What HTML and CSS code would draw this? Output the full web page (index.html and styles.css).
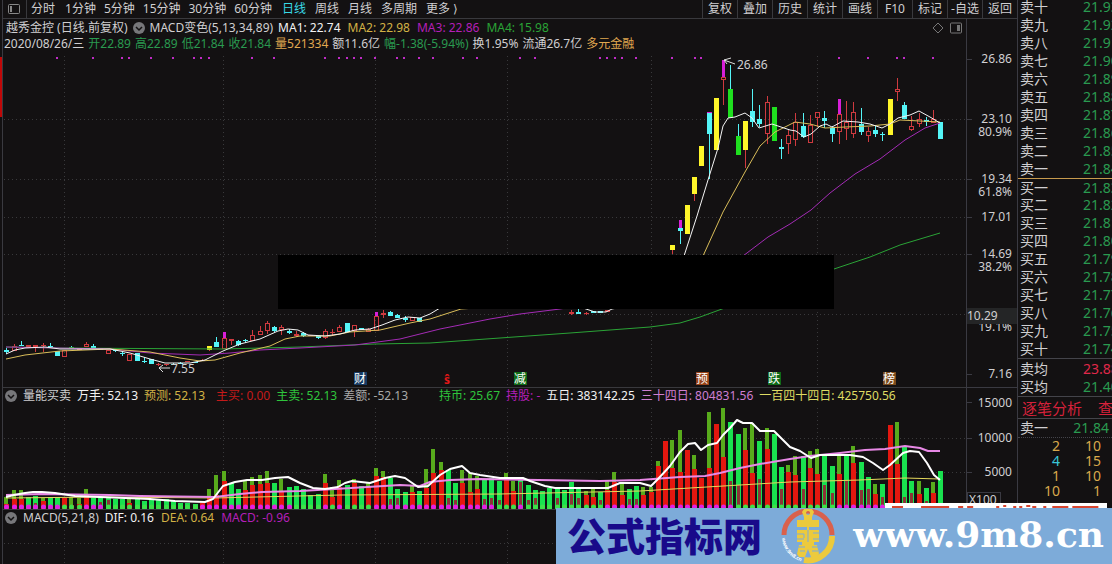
FILE: index.html
```
<!DOCTYPE html>
<html lang="zh-CN">
<head>
    <meta charset="UTF-8">
    <meta name="viewport" content="width=device-width, initial-scale=1.0">
    <title>越秀金控 日线</title>
    <link rel="stylesheet" href="styles.css">
</head>
<body>
    <div class="edge"><div class="edge-mark"></div></div>

    <div class="main">
        <nav class="toolbar">
            <button class="layout-button" aria-label="布局">
                <svg width="12" height="12" viewBox="0 0 12 12"><rect x="0.5" y="1.5" width="11" height="9" rx="1" fill="none" stroke="#888"/><rect x="2" y="3" width="2" height="6" fill="#888"/></svg>
            </button>
            <div class="periods">
                <button>分时</button>
                <div class="minutes">
                    <button>1分钟</button>
                    <button>5分钟</button>
                    <button>15分钟</button>
                    <button>30分钟</button>
                    <button>60分钟</button>
                </div>
                <div class="days">
                    <button class="active">日线</button>
                    <button>周线</button>
                    <button>月线</button>
                    <button>多周期</button>
                    <button>更多&nbsp;⟩</button>
                </div>
            </div>
            <div class="tools">
                <button>复权</button>
                <button>叠加</button>
                <button>历史</button>
                <button>统计</button>
                <button>画线</button>
                <button>F10</button>
                <button>标记</button>
                <button>-自选</button>
                <button>返回</button>
            </div>
        </nav>

        <div class="workspace">
            <div class="charts">
                <section class="panel price-panel">
                    <div class="legend title-legend">
                        <span>越秀金控 (日线.前复权)</span>
                        <svg class="fold" viewBox="0 0 12 12"><circle cx="6" cy="6" r="6" fill="#77777a"/><path d="M3 5l3 3 3-3" fill="none" stroke="#131112" stroke-width="1.5"/></svg>
                        <span>MACD变色(5,13,34,89)</span>
                        <div class="averages">
                            <span class="white">MA1: 22.74</span>
                            <span class="gold">MA2: 22.98</span>
                            <span class="magenta">MA3: 22.86</span>
                            <span class="green">MA4: 15.98</span>
                        </div>
                        <span class="legend-icons">
                            <svg width="12" height="12" viewBox="0 0 12 12"><path d="M6 1l5 5-5 5-5-5z" fill="none" stroke="#777"/></svg>
                            <svg width="12" height="12" viewBox="0 0 12 12"><rect x="0.5" y="1" width="11" height="10" rx="1" fill="none" stroke="#777"/><rect x="7" y="3" width="3" height="6" fill="#777"/></svg>
                        </span>
                    </div>
                    <div class="legend quote-legend">
                        <span>2020/08/26/三</span>
                        <span class="down">开22.89</span>
                        <span class="down">高22.89</span>
                        <span class="down">低21.84</span>
                        <span class="down">收21.84</span>
                        <span class="amber">量521334</span>
                        <span>额11.6亿</span>
                        <span class="down">幅-1.38(-5.94%)</span>
                        <span>换1.95%</span>
                        <span>流通26.7亿</span>
                        <span class="amber">多元金融</span>
                    </div>
                    <svg id="price-chart" class="price-chart" viewBox="3 52 963 335" preserveAspectRatio="none"></svg>
                </section>

                <section class="panel">
                    <div class="legend">
                        <svg class="fold" viewBox="0 0 12 12"><circle cx="6" cy="6" r="6" fill="#77777a"/><path d="M3 5l3 3 3-3" fill="none" stroke="#131112" stroke-width="1.5"/></svg>
                        <span>量能买卖</span>
                        <span class="white">万手: 52.13</span>
                        <span class="gold">预测: 52.13</span>
                        <span class="red after-pair">主买: 0.00</span>
                        <span class="lime">主卖: 52.13</span>
                        <span class="grey">差额: -52.13</span>
                        <span class="lime after-group">持币: 25.67</span>
                        <span class="magenta">持股: -</span>
                        <span class="white">五日: 383142.25</span>
                        <span class="violet">三十四日: 804831.56</span>
                        <span class="yellow">一百四十四日: 425750.56</span>
                    </div>
                    <svg id="volume-chart" class="volume-chart" viewBox="3 404 963 105" preserveAspectRatio="none"></svg>
                </section>

                <section class="panel">
                    <div class="legend">
                        <svg class="fold" viewBox="0 0 12 12"><circle cx="6" cy="6" r="6" fill="#77777a"/><path d="M3 5l3 3 3-3" fill="none" stroke="#131112" stroke-width="1.5"/></svg>
                        <span>MACD(5,21,8)</span>
                        <div class="averages">
                            <span class="white">DIF: 0.16</span>
                            <span class="gold">DEA: 0.64</span>
                            <span class="magenta">MACD: -0.96</span>
                        </div>
                    </div>
                    <svg id="macd-chart" class="macd-chart" viewBox="3 526 963 38" preserveAspectRatio="none"></svg>
                </section>
            </div>

            <div class="axis">
                <svg id="axis" width="50" height="545" viewBox="967 19 50 545"></svg>
            </div>
        </div>
    </div>

    <aside class="book">
        <table class="levels">
            <tbody id="levels"></tbody>
        </table>
        <div class="tabs">
            <button>逐笔分析</button>
            <button>查看</button>
        </div>
        <div class="last"><span>卖一</span><span class="down">21.84</span></div>
        <table class="ticks">
            <tbody>
                <tr><td>2</td><td>10</td></tr>
                <tr><td class="cyan">4</td><td>15</td></tr>
                <tr><td>1</td><td>10</td></tr>
                <tr><td>10</td><td>1</td></tr>
            </tbody>
        </table>
    </aside>

    <div class="banner">
        <svg class="banner-strip" viewBox="0 0 222 5" preserveAspectRatio="none">
            <rect width="222" height="5" fill="#fff"/>
            <path d="M7 4h11M36 4h28M73 4h5M82 4h6M111 4h3M118 3h3M128 4h3M134 4h3M141 3h4M147 4h4M158 4h3M167 4h16M187 4h26" stroke="#d8452f" stroke-width="2"/>
        </svg>
        <div class="banner-body">
            <span class="site-name">公式指标网</span>
            <svg class="site-logo" viewBox="0 0 56 56">
                <path d="M4 27A24 24 0 0 1 52 27" fill="none" stroke="#d9614c" stroke-width="5"/>
                <path d="M52 28A24 24 0 0 1 24 52" fill="none" stroke="#ecca3d" stroke-width="6"/>
                <path id="logo-arc" d="M2 30A26 26 0 0 0 25 54" fill="none"/>
                <text class="logo-text"><textPath href="#logo-arc">www.9m8.cn</textPath></text>
                <path fill="#ecca3d" fill-rule="evenodd" d="M24 1h8l2 3-2 5v3h7v7H29v3h10v12h-5v3h3l2 9-3 3h-5l-3-8-3 8h-6l-2-3 2-9h3v-3h-5V22h10v-3H17v-7h7V9l-2-5zM28 3a2 2 0 1 0 .1 0z"/>
                <path d="M17 26h7v4M33 25h6M28 22v12M17 31h7M33 31h6M18 39h7M32 39h7M20 43h5M32 43h6" fill="none" stroke="#7dabd9"/>
            </svg>
            <span class="site-url">www.9m8.cn</span>
        </div>
    </div>

    <script src="charts.js"></script>
</body>
</html>
```
FILE: styles.css
```
* {
    box-sizing: border-box;
}
body {
    margin: 0;
    height: 100vh;
    overflow: hidden;
    position: relative;
    display: flex;
    background-color: #131112;
    color: #d0cfd1;
    font-family: "Noto Sans", "Noto Sans CJK SC", sans-serif;
    font-size: 12px;
    line-height: 16px;
}
button {
    border: none;
    padding: 0;
    margin: 0;
    background: none;
    color: inherit;
    font: inherit;
    white-space: nowrap;
    cursor: pointer;
}
svg {
    display: block;
}
.edge {
    width: 3px;
    border-right: 1px solid #3a3a40;
    padding-top: 57px;
}
.edge-mark {
    height: 60px;
    background-color: #c00808;
}
.main {
    flex: 1;
    min-width: 0;
}
/* top bar */
.toolbar {
    height: 19px;
    display: flex;
    align-items: center;
    border-bottom: 1px solid #39393d;
}
.layout-button {
    width: 24px;
    height: 18px;
    padding-left: 5px;
    border-right: 1px solid #39393d;
}
.periods {
    display: flex;
    gap: 10px;
    padding-left: 4px;
}
.minutes {
    display: flex;
    gap: 8px;
}
.days {
    display: flex;
    gap: 9px;
}
.active {
    color: #39dbe8;
}
.tools {
    display: flex;
    margin-left: auto;
}
.tools button {
    width: 35px;
    height: 18px;
    border-left: 1px solid #39393d;
    text-align: center;
}
/* charts */
.workspace {
    display: flex;
}
.charts {
    flex: 1;
    min-width: 0;
}
.axis {
    border-left: 1px solid #3a3a42;
}
.panel {
    border-top: 1px solid #39393d;
}
.price-panel {
    border-top: none;
}
.legend {
    height: 16px;
    display: flex;
    align-items: center;
    gap: 6px;
    padding-left: 2px;
    white-space: nowrap;
}
.title-legend {
    height: 17px;
    padding-left: 3px;
    gap: 5px;
}
.quote-legend {
    gap: 4px;
    padding-left: 1px;
}
.averages {
    display: flex;
    gap: 7px;
}
.legend-icons {
    display: flex;
    gap: 6px;
    margin-left: auto;
    padding-right: 4px;
}
.fold {
    width: 12px;
    height: 12px;
}
.after-pair {
    margin-left: 5px;
}
.after-group {
    margin-left: 25px;
}
.price-chart,
.volume-chart,
.macd-chart {
    width: 100%;
}
.price-chart {
    height: 335px;
}
.volume-chart {
    height: 105px;
}
.macd-chart {
    height: 38px;
}
.white { color: #f2f2f2; }
.gold { color: #d2b145; }
.magenta { color: #b41fb8; }
.green { color: #2aa336; }
.down { color: #2a9a50; }
.amber { color: #e0a850; }
.red { color: #c41a1a; }
.lime { color: #2fc43c; }
.grey { color: #a9a9a9; }
.violet { color: #cf7fd2; }
.yellow { color: #dfdc63; }
.cyan { color: #39c6d8; }
/* svg parts */
.grid {
    stroke: #39393b;
    stroke-dasharray: 1 3;
}
.solid {
    stroke: #3a3a42;
}
.chart-text {
    font-size: 12px;
    fill: #d0cfd1;
}
.line {
    fill: none;
    stroke-linejoin: round;
}
/* order book */
.book {
    width: 95px;
    border-left: 1px solid #3a3a42;
    overflow: hidden;
    font-size: 14px;
    line-height: 18px;
}
.levels,
.ticks {
    width: 100%;
    table-layout: fixed;
    border-spacing: 0;
}
.levels {
    margin-top: -2px;
}
.levels th,
.levels td {
    height: 18px;
    padding: 0;
    text-align: left;
    font-weight: normal;
    line-height: 16px;
    white-space: nowrap;
}
.levels th {
    width: 65px;
    padding-left: 2px;
}
.first-bid th,
.first-bid td {
    border-top: 1px solid #c79a4d;
}
.average-top th,
.average-top td {
    height: 20px;
    border-top: 1px solid #44444a;
}
.levels .high {
    color: #e0284a;
}
.tabs {
    height: 23px;
    display: flex;
    align-items: center;
    gap: 16px;
    padding-left: 4px;
    border-top: 1px solid #44444a;
    border-bottom: 1px solid #44444a;
    color: #d7213b;
    font-size: 15px;
}
.last {
    display: flex;
    justify-content: space-between;
    padding: 0 3px 0 2px;
    border-bottom: 1px dotted #44444a;
}
.ticks td {
    height: 15px;
    padding: 0 11px 0 0;
    text-align: right;
    line-height: 15px;
    color: #d9a94c;
}
.ticks td:first-child {
    width: 53px;
}
.ticks .cyan {
    color: #39c6d8;
}
/* site banner over the lower right corner */
.banner {
    position: absolute;
    right: 0;
    bottom: 0;
    width: 50%;
}
.banner-strip {
    width: 40%;
    height: 5px;
    margin: 0 5px 0 auto;
}
.banner-body {
    height: 56px;
    display: flex;
    align-items: center;
    justify-content: space-between;
    padding: 0 8px 0 11px;
    background-color: #7dabd9;
    white-space: nowrap;
}
.site-name {
    color: #190a8a;
    font-family: "Noto Sans CJK SC", sans-serif;
    font-weight: 900;
    font-size: 39px;
    line-height: 52px;
    padding-bottom: 4px;
}
.site-logo {
    width: 56px;
    height: 56px;
}
.logo-text {
    font-size: 5px;
    font-weight: bold;
    fill: #fff;
}
.site-url {
    color: #fff;
    font-family: "DejaVu Serif", serif;
    font-weight: bold;
    font-size: 36px;
    line-height: 48px;
    padding-bottom: 4px;
}
```
FILE: charts.js
```
const NS = 'http://www.w3.org/2000/svg';
const COUNT = 130;
const colors = { r: '#cf3a3f', c: '#54f5f7', y: '#fff62a', g: '#1fe01f', m: '#d81fd8' };

// Centre of the bar with this index
function barX(i) {
    return Math.round(6.3 + 7.24 * i);
}

function add(parent, name, attrs, text) {
    const el = document.createElementNS(NS, name);
    for (const key in attrs) el.setAttribute(key, attrs[key]);
    if (text !== undefined) el.textContent = text;
    parent.appendChild(el);
    return el;
}

function rect(parent, x, y, width, height, fill) {
    add(parent, 'rect', { x, y, width, height, fill, 'shape-rendering': 'crispEdges' });
}

function line(parent, points, stroke, width) {
    add(parent, 'polyline', { class: 'line', points, stroke, 'stroke-width': width || 1 });
}

function grid(svg, rows, top, bottom) {
    [64, 223, 375, 507, 651, 817].forEach(x => {
        add(svg, 'path', { class: 'grid', d: `M${x + 0.5} ${top}V${bottom}` });
    });
    rows.forEach(y => {
        add(svg, 'path', { class: 'grid', d: `M4 ${y + 0.5}H966` });
    });
}

// index, high, low, body top, body bottom, kind
const candles = [
    [0,348,354,350,352,'c'],[1,344,351,346,351,'r'],[2,341,346,345,346,'c'],[3,345,347,345,347,'r'],
    [4,345,352,345,347,'r'],[5,343,352,345,346,'r'],[6,343,347,346,347,'c'],[7,351,356,351,356,'c'],
    [8,350,357,350,357,'r'],[9,346,348,347,348,'g'],[10,348,350,348,350,'r'],[11,342,347,344,347,'r'],
    [12,344,348,346,348,'c'],[13,348,350,348,350,'r'],[14,350,354,350,354,'r'],[15,350,352,350,351,'c'],
    [16,352,356,353,354,'c'],[17,354,361,354,361,'r'],[18,353,361,353,361,'c'],[19,357,363,361,362,'c'],
    [20,359,364,359,364,'c'],[21,363,366,364,365,'r'],[22,364,366,364,365,'r'],[23,363,365,364,365,'c'],
    [24,362,364,363,364,'c'],[25,361,362,361,362,'r'],[26,362,363,362,363,'c'],[27,359,361,360,361,'r'],
    [28,346,351,346,350,'y'],[29,337,347,342,347,'c'],[30,332,349,338,349,'r'],[31,339,345,339,341,'r'],
    [32,340,346,341,345,'c'],[33,339,343,340,341,'c'],[34,330,341,335,341,'r'],[35,326,335,331,335,'r'],
    [36,321,334,323,331,'r'],[37,326,332,327,331,'c'],[38,325,335,327,330,'r'],[39,329,334,331,333,'c'],
    [40,331,337,334,336,'r'],[41,332,337,333,336,'c'],[42,335,336,335,336,'r'],[43,336,339,336,338,'c'],
    [44,329,339,331,338,'r'],[45,329,335,332,333,'r'],[46,325,332,327,332,'r'],[47,323,332,323,332,'c'],
    [48,325,337,325,331,'r'],[49,328,330,328,330,'c'],[50,328,332,329,332,'r'],[51,316,331,316,331,'r'],
    [52,310,318,313,315,'r'],[53,311,316,312,316,'c'],[54,314,318,315,318,'c'],[55,316,322,318,320,'c'],
    [56,317,321,317,321,'r'],[57,318,322,318,322,'c'],[78,310,315,312,314,'r'],[79,309,314,312,314,'c'],
    [80,312,315,313,314,'r'],[81,311,313,311,313,'c'],[82,311,313,311,313,'c'],[83,310,312,310,312,'r'],
    [92,245,254,245,250,'y'],[93,228,244,228,231,'c'],[94,205,234,205,234,'y'],[95,177,201,177,194,'y'],
    [96,146,166,146,166,'y'],[97,112,179,113,134,'c'],[98,98,150,98,150,'y'],[99,77,105,77,80,'r'],
    [100,65,118,89,118,'g'],[101,124,155,136,155,'g'],[102,121,168,121,150,'y'],[103,89,127,111,122,'c'],
    [104,105,127,119,124,'c'],[105,96,144,102,134,'r'],[106,107,141,107,141,'g'],[107,139,159,147,149,'c'],
    [108,130,154,135,144,'r'],[109,113,146,122,140,'r'],[110,113,138,126,137,'c'],[111,115,143,125,143,'r'],
    [112,112,127,112,118,'r'],[113,111,128,118,121,'c'],[114,126,142,128,134,'c'],[115,114,144,114,132,'r'],
    [116,101,140,122,129,'r'],[117,102,138,112,134,'r'],[118,108,135,124,132,'c'],[119,127,142,131,136,'r'],
    [120,126,137,130,134,'c'],[121,132,141,134,135,'c'],[122,99,135,99,135,'y'],[123,78,101,89,92,'r'],
    [124,102,119,105,119,'c'],[125,116,131,126,130,'r'],[126,113,127,119,124,'r'],[127,117,126,120,122,'c'],
    [128,110,123,119,123,'r'],[129,122,139,122,139,'c']
];

// magenta caps: index, top, bottom, width
const caps = [[30,332,338,3],[51,312,316,3],[93,220,228,3],[97,112,113,5],[99,60,77,3],[115,99,114,3]];

const signalDots = [57,93,122,129,151,173,194,201,209,252,274,325,339,347,354,361,375,397,404,419,433,463,477,520,535,
    600,607,615,622,636,672,695,701,839,868,897,904,933];

function drawPrice() {
    const svg = document.getElementById('price-chart');
    grid(svg, [119, 179, 217, 254, 314], 56, 386);

    signalDots.forEach(x => rect(svg, x - 1, 57, 2, 2, '#c02bc6'));

    candles.forEach(([i, high, low, top, bottom, kind]) => {
        const x = barX(i);
        const wick = kind === 'y' ? colors.r : (kind === 'g' ? colors.c : colors[kind]);
        if (kind === 'r' && bottom - top > 2) {
            rect(svg, x, high, 1, top - high, wick);
            rect(svg, x, bottom, 1, low - bottom, wick);
            add(svg, 'rect', { x: x - 1.5, y: top + 0.5, width: 4, height: bottom - top - 1, fill: 'none', stroke: wick });
        } else {
            rect(svg, x, high, 1, low - high, wick);
            rect(svg, x - 2, top, 5, bottom - top, colors[kind]);
        }
    });
    caps.forEach(([i, top, bottom, width]) => {
        rect(svg, barX(i) - (width - 1) / 2, top, width, bottom - top, colors.m);
    });

    line(svg, '6,347 60,348 223,349 300,347 375,344 430,343 500,338 570,333 650,327 680,323 700,317 722,309 780,288 834,269 870,257 900,245 940,233', '#2aa336');
    line(svg, '6,347 110,349 150,353 200,355 230,353 260,350 300,348 355,345 400,339 440,329 490,319 520,314 560,309 680,290 743,256 768,237 790,224 811,210 830,193 855,174 880,159 905,140 925,128 940,123', '#a32bb5');
    line(svg, '6,359 25,355 60,351 110,349 150,352 180,358 200,361 215,360 240,353 270,346 285,339 300,336 330,336 350,332 380,330 410,323 430,319 461,309 600,300 680,295 703,256 723,212 745,172 760,146 775,132 795,122 810,124 825,128 845,127 870,126 890,124 900,120 940,122', '#d9bd5a');
    line(svg, '6,354 15,350 25,348 45,347 60,349 90,349 110,349 130,353 150,359 165,363 190,363 205,360 223,351 240,344 260,339 278,331 288,329 298,330 308,335 325,336 340,334 355,330 370,329 382,325 395,320 408,317 420,318 430,314 440,308 583,308 595,312 606,312 612,309 660,300 684,256 697,216 708,180 718,148 723,126 728,118 735,117 745,113 752,118 759,128 772,124 790,130 796,131 804,137 811,134 820,126 826,124 832,127 843,121 858,122 870,124 882,128 890,124 898,118 910,115 919,111 930,117 940,123', '#f4f4f4');

    // high and low callouts
    line(svg, '735,64 724,60 731,58', '#ddd');
    line(svg, '724,60 727,64', '#ddd');
    add(svg, 'text', { class: 'chart-text', x: 737, y: 69 }, '26.86');
    line(svg, '170,368 159,368 163,365', '#ddd');
    line(svg, '159,368 163,372', '#ddd');
    add(svg, 'text', { class: 'chart-text', x: 171, y: 373 }, '7.55');

    // hidden block
    rect(svg, 278, 255, 556, 54, '#000');

    [[360,'财','#163a63'],[520,'减','#0f6a17'],[702,'预','#964218'],[774,'跌','#0f6a17'],[889,'榜','#7a4a1c']].forEach(([x, label, fill]) => {
        rect(svg, x - 6, 372, 13, 13, fill);
        add(svg, 'text', { x: x, y: 383, 'text-anchor': 'middle', 'font-size': 12, fill: '#fff' }, label);
    });
    add(svg, 'text', { x: 447, y: 384, 'text-anchor': 'middle', 'font-size': 12, 'font-weight': 'bold', fill: '#e01818' }, 'ŝ');
}

// kind, top of the bar, top of its lower part (509 when there is none)
const volumes = `r497,504 r490,499 r490,499 g497,509 g496,503 r498,501 g497,509 g497,509 r498,498 r497,505
r498,504 r489,495 g498,509 g498,502 g498,500 g499,509 g499,509 r498,503 g498,509 g501,509
g500,509 g499,509 g499,509 g501,509 g503,509 g503,509 g504,509 r503,503 r489,497 r475,495
r471,481 g483,509 g489,509 r481,490 r477,485 r475,484 r471,483 g483,509 r479,491 g487,509
g486,509 g489,509 g495,509 g494,509 r474,483 r487,497 r480,487 g485,509 r479,483 g486,509
r483,487 r468,476 r471,477 g478,499 g489,498 g492,509 r486,492 g491,509 r469,488 r449,473
r462,470 g470,498 g483,500 r470,483 r473,492 r476,489 g480,499 g478,498 g481,500 r473,477
r481,491 g480,482 g485,500 g490,498 g491,509 g488,509 g489,498 g490,509 g482,494 g487,498
r491,495 r489,497 g492,500 r480,490 r472,482 r482,495 g489,499 g486,499 r487,495 r487,492
r461,466 r441,441 r440,468 r430,472 r450,450 r455,469 r478,478 r412,468 r424,424 r408,457
g422,481 g434,485 r428,450 r423,473 g441,479 r428,449 g434,509 g467,489 r465,472 r456,475
g456,489 r451,468 r449,474 g455,485 g466,493 r455,474 g454,480 r446,463 g462,490 g477,489
r484,494 g484,497 r425,425 r422,464 g446,497 g481,493 r481,494 g488,501 r482,493 g471,509`.split(/\s+/);

const greenDots = [[8,10],[14,26],[40,43],[45,45],[47,50],[68,70],[72,82],[101,114]];

function drawVolume() {
    const svg = document.getElementById('volume-chart');
    grid(svg, [438, 472], 408, 509);

    for (let i = 0; i < COUNT; i++) {
        const kind = volumes[i][0];
        const [top, split] = volumes[i].slice(1).split(',').map(Number);
        const x = barX(i);
        if (kind === 'r') {
            rect(svg, x - 2, top, 4, split - top, '#58ab1c');
            rect(svg, x - 2, split, 5, 509 - split, '#e3170f');
        } else {
            rect(svg, x - 2, top, 5, 509 - top, '#19e24f');
            rect(svg, x - 1, split, 3, 509 - split, '#8b3436');
        }
        const isGreen = greenDots.some(([from, to]) => i >= from && i <= to);
        add(svg, 'circle', { cx: x + 0.5, cy: 507, r: 2.5, fill: isGreen ? '#3fe04a' : '#e31fe3' });
    }

    line(svg, '6,498 100,497 215,498 340,495 500,494 640,491 740,485 790,482 860,480 905,478 940,479', '#e5d95c');
    line(svg, '6,495 40,494 110,495 140,496 215,497 240,494 262,492 300,491 335,489 400,485 420,486 430,482 450,480 480,479 600,481 640,480 680,477 705,476 720,473 740,468 760,464 790,459 810,456 840,453 865,450 885,449 905,446 920,448 928,451 940,451', '#e889e6', 2);
    line(svg, '6,497 14,495 25,493 33,492 42,492 55,493 75,496 100,497 125,498 150,499 175,501 205,502 213,499 223,486 235,482 247,480 262,480 275,478 288,477 300,483 313,488 325,489 338,487 345,483 352,481 370,483 385,478 395,476 405,478 418,487 428,486 440,475 450,469 462,466 470,473 480,475 500,478 523,478 530,481 545,486 555,488 580,488 608,488 620,483 640,483 651,486 658,479 670,466 680,452 688,444 695,443 701,450 708,445 717,443 723,435 730,428 737,420 743,423 752,423 760,431 774,431 790,447 800,451 811,458 820,455 850,455 863,457 873,463 883,470 890,465 903,453 910,451 919,452 927,463 934,475 940,480', '#fff', 2);
}

function drawAxis() {
    const svg = document.getElementById('axis');
    const label = (y, text) => add(svg, 'text', { class: 'chart-text', x: 1012, y: y + 4, 'text-anchor': 'end' }, text);

    [59, 119, 179, 217, 254, 374, 402, 438, 472].forEach(y => {
        add(svg, 'path', { class: 'solid', d: `M967 ${y + 0.5}h5` });
    });
    [[59,'26.86'],[119,'23.10'],[132,'80.9%'],[179,'19.34'],[192,'61.8%'],[217,'17.01'],[254,'14.69'],[267,'38.2%'],
        [327,'19.1%'],[374,'7.16'],[403,'15000'],[438,'10000'],[472,'5000']].forEach(([y, text]) => label(y, text));

    rect(svg, 967, 308, 50, 16, '#242526');
    add(svg, 'text', { class: 'chart-text', x: 967, y: 320 }, '10.29');

    add(svg, 'path', { class: 'solid', d: 'M967 387.5h50' });
    add(svg, 'rect', { class: 'solid', x: 967.5, y: 492.5, width: 33, height: 15, fill: '#131112' });
    add(svg, 'text', { class: 'chart-text', x: 969, y: 504 }, 'X100');
}

function fillLevels() {
    const names = '十九八七六五四三二一'.split('');
    const rows = [];
    names.forEach((n, k) => rows.push(['卖' + n, (21.93 - k / 100).toFixed(2), 'down', '']));
    names.slice().reverse().forEach((n, k) => rows.push(['买' + n, (21.83 - k / 100).toFixed(2), 'down', k === 0 ? 'first-bid' : '']));
    rows.push(['卖均', '23.88', 'high', 'average-top']);
    rows.push(['买均', '21.40', 'down', '']);
    document.getElementById('levels').innerHTML = rows.map(([name, price, tone, row]) =>
        `<tr class="${row}"><th scope="row">${name}</th><td class="${tone}">${price}</td></tr>`).join('');
}

drawPrice();
drawVolume();
grid(document.getElementById('macd-chart'), [543], 530, 564);
drawAxis();
fillLevels();
```
